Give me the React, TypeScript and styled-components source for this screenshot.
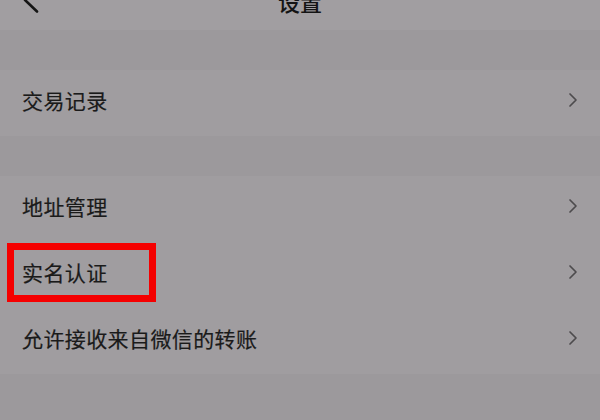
import styled, { createGlobalStyle } from "styled-components";

const GlobalStyle = createGlobalStyle`
  html, body {
    margin: 0;
    padding: 0;
    background: #9c999c;
    overflow: hidden;
  }
  body {
    font-family: "Noto Sans CJK SC", "Noto Sans", sans-serif;
  }
`;

type Item = { label: string; marked?: boolean };

const groups: Item[][] = [
  [{ label: "交易记录" }],
  [
    { label: "地址管理" },
    { label: "实名认证", marked: true },
    { label: "允许接收来自微信的转账" },
  ],
];

export default function App() {
  return (
    <>
      <GlobalStyle />
      <Page>
        <Header>
          <Back>
            <svg width="16" height="26" viewBox="0 0 16 26">
              <path
                d="M14 1.5 L2 13 L14 24.5"
                fill="none"
                stroke="#151515"
                strokeWidth="2.6"
                strokeLinecap="round"
                strokeLinejoin="round"
              />
            </svg>
          </Back>
          <Title>设置</Title>
        </Header>
        {groups.map((group, i) => (
          <Group key={i}>
            {group.map((item) => (
              <Row key={item.label}>
                <Label>{item.label}</Label>
                <Chevron>
                  <svg width="10" height="16" viewBox="0 0 10 16">
                    <path
                      d="M2 2 L8 8 L2 14"
                      fill="none"
                      stroke="#4d4b4d"
                      strokeWidth="1.7"
                      strokeLinecap="round"
                      strokeLinejoin="round"
                    />
                  </svg>
                </Chevron>
                {item.marked && <Mark />}
              </Row>
            ))}
          </Group>
        ))}
      </Page>
    </>
  );
}

const Page = styled.div`
  margin-top: -30px;
  width: 600px;
  display: flex;
  flex-direction: column;
  gap: 40px;
`;

const Header = styled.div`
  height: 60px;
  background: #a19ea1;
  display: flex;
  align-items: center;
  justify-content: center;
  position: relative;
`;

const Back = styled.div`
  position: absolute;
  left: 23px;
  top: 17px;
  display: flex;
`;

const Title = styled.div`
  font-size: 22px;
  line-height: 22px;
  font-weight: 500;
  color: #141414;
  margin-top: 2px;
`;

const Group = styled.div`
  background: #a09da0;
  display: flex;
  flex-direction: column;
`;

const Row = styled.div`
  position: relative;
  height: 66px;
  box-sizing: border-box;
  padding: 0 22px 7px 22px;
  display: flex;
  align-items: center;
  justify-content: space-between;
`;

const Label = styled.span`
  font-size: 21px;
  color: #1a1a1a;
  letter-spacing: 0.4px;
  -webkit-text-stroke: 0.2px #1a1a1a;
`;

const Chevron = styled.span`
  display: flex;
`;

const Mark = styled.div`
  position: absolute;
  left: 7px;
  top: 1px;
  width: 149px;
  height: 59px;
  box-sizing: border-box;
  border: 7px solid #f50000;
`;
